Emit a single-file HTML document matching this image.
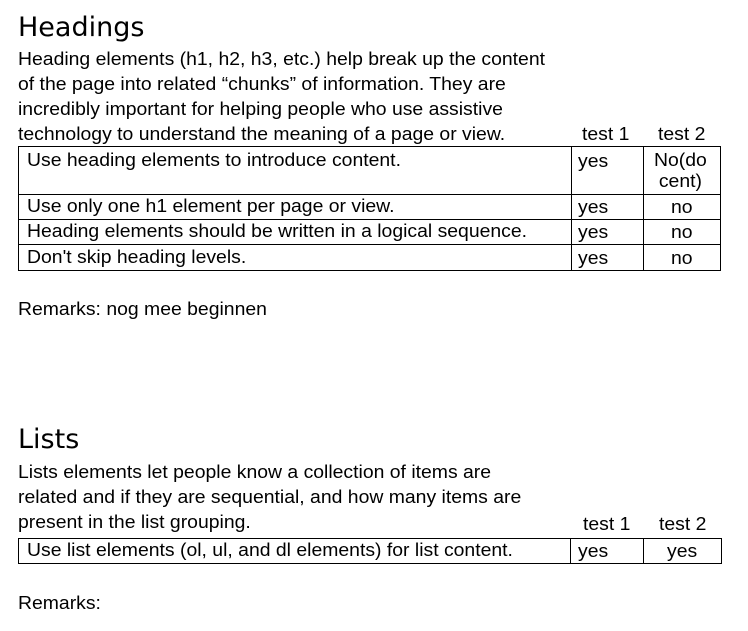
<!DOCTYPE html>
<html><head><meta charset="utf-8"><style>
body{margin:0;width:748px;height:631px;background:#fff;font-family:"Liberation Sans",sans-serif;color:#000;position:relative;overflow:hidden}
h1{position:absolute;margin:0;font-family:"DejaVu Sans",sans-serif;font-weight:normal;font-size:27px;left:18px}
.p{position:absolute;left:18px;font-size:18px;line-height:25px;transform:scaleX(1.077);transform-origin:0 0;white-space:nowrap}
.c{position:absolute;font-size:18px;line-height:20px;transform:scaleX(1.077);transform-origin:0 0;white-space:nowrap}
.b{position:absolute;border:1px solid #000;box-sizing:border-box}
.h{position:absolute;height:1px;background:#000}
.v{position:absolute;width:1px;background:#000}
</style></head><body>
<h1 style="top:12px">Headings</h1>
<div class="p" style="top:47px">Heading elements (h1, h2, h3, etc.) help break up the content<br>of the page into related “chunks” of information. They are<br>incredibly important for helping people who use assistive<br>technology to understand the meaning of a page or view.</div>
<div class="c" style="left:582px;top:124px">test 1</div>
<div class="c" style="left:658px;top:124px">test 2</div>
<div class="b" style="left:18px;top:146px;width:703px;height:125px"></div>
<div class="h" style="left:18px;top:194px;width:703px"></div>
<div class="h" style="left:18px;top:219px;width:703px"></div>
<div class="h" style="left:18px;top:244px;width:703px"></div>
<div class="v" style="left:571px;top:146px;height:125px"></div>
<div class="v" style="left:643px;top:146px;height:125px"></div>
<div class="c" style="left:27px;top:150px">Use heading elements to introduce content.</div>
<div class="c" style="left:578px;top:151px">yes</div>
<div class="c" style="left:654px;top:150px;line-height:21px;text-align:center">No(do<br>cent)</div>
<div class="c" style="left:27px;top:196px">Use only one h1 element per page or view.</div>
<div class="c" style="left:578px;top:197px">yes</div><div class="c" style="left:671px;top:197px">no</div>
<div class="c" style="left:27px;top:221px">Heading elements should be written in a logical sequence.</div>
<div class="c" style="left:578px;top:222px">yes</div><div class="c" style="left:671px;top:222px">no</div>
<div class="c" style="left:27px;top:247px">Don't skip heading levels.</div>
<div class="c" style="left:578px;top:248px">yes</div><div class="c" style="left:671px;top:248px">no</div>
<div class="c" style="left:18px;top:299px">Remarks: nog mee beginnen</div>
<h1 style="top:424px">Lists</h1>
<div class="p" style="top:460px">Lists elements let people know a collection of items are<br>related and if they are sequential, and how many items are<br>present in the list grouping.</div>
<div class="c" style="left:583px;top:514px">test 1</div>
<div class="c" style="left:659px;top:514px">test 2</div>
<div class="b" style="left:18px;top:538px;width:704px;height:26px"></div>
<div class="v" style="left:570px;top:538px;height:26px"></div>
<div class="v" style="left:643px;top:538px;height:26px"></div>
<div class="c" style="left:27px;top:540px">Use list elements (ol, ul, and dl elements) for list content.</div>
<div class="c" style="left:578px;top:541px">yes</div><div class="c" style="left:667px;top:541px">yes</div>
<div class="c" style="left:18px;top:593px">Remarks:</div>
</body></html>
